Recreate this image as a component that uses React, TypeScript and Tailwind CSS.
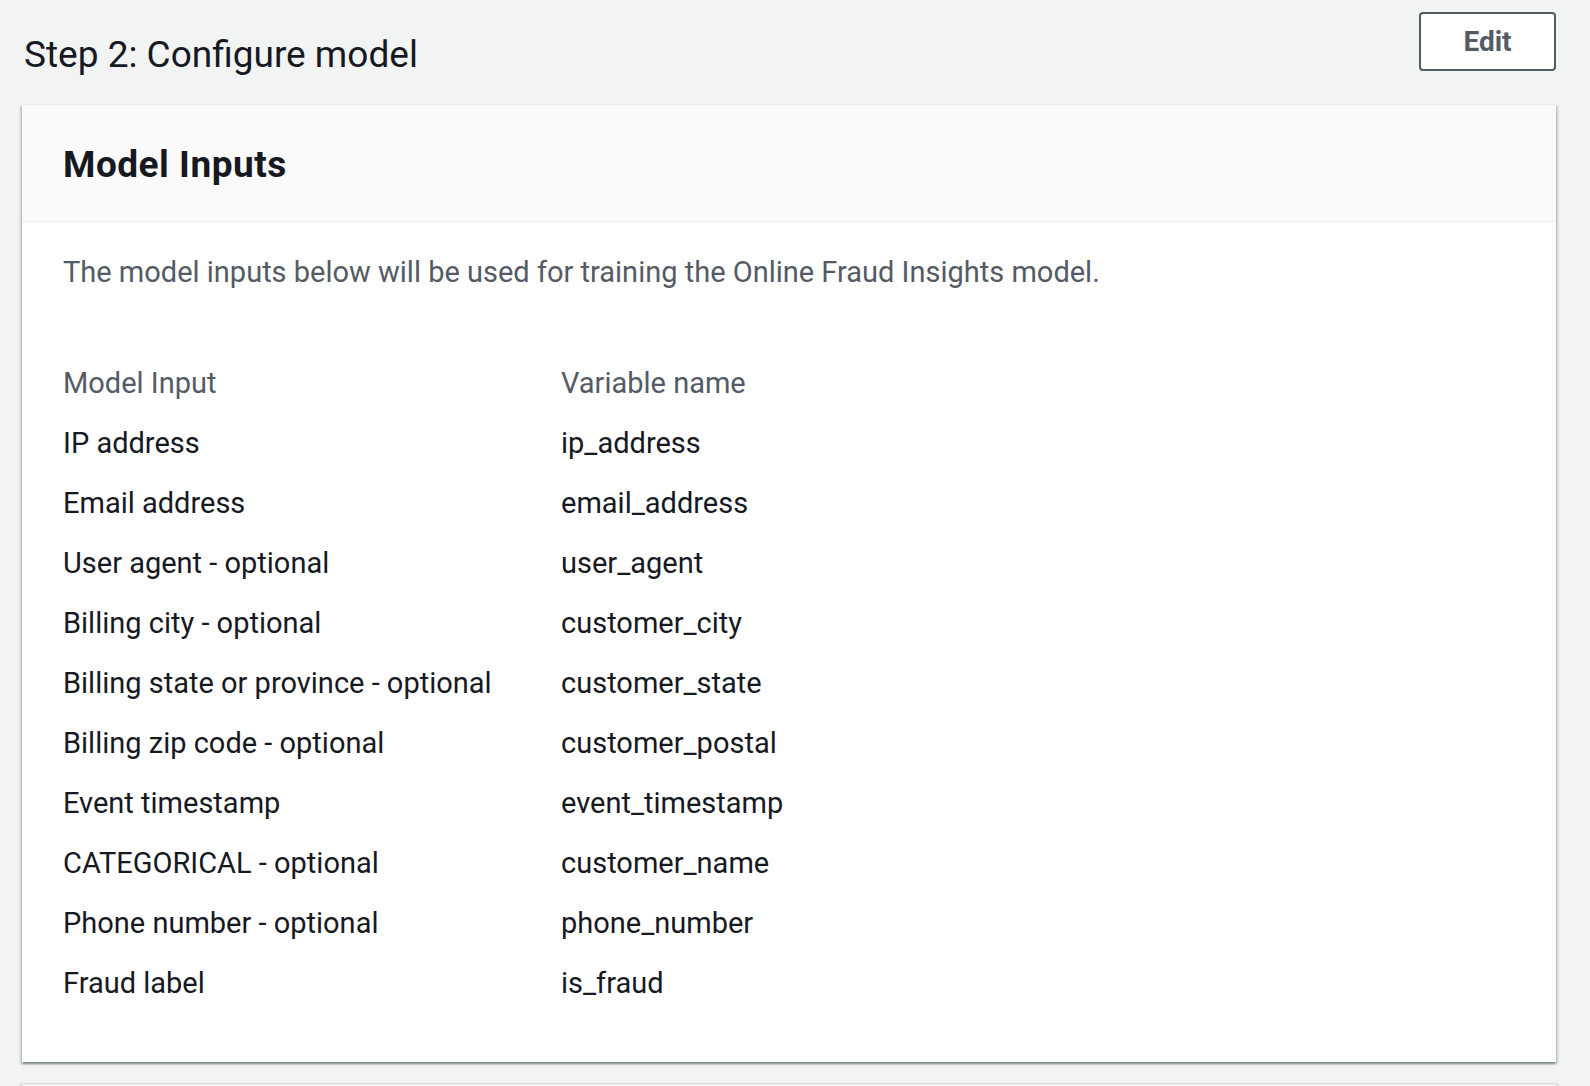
const rows: [string, string][] = [
  ['IP address', 'ip_address'],
  ['Email address', 'email_address'],
  ['User agent - optional', 'user_agent'],
  ['Billing city - optional', 'customer_city'],
  ['Billing state or province - optional', 'customer_state'],
  ['Billing zip code - optional', 'customer_postal'],
  ['Event timestamp', 'event_timestamp'],
  ['CATEGORICAL - optional', 'customer_name'],
  ['Phone number - optional', 'phone_number'],
  ['Fraud label', 'is_fraud'],
];

export default function App() {
  return (
    <div
      className="min-h-[1086px] bg-[#f2f3f3] pl-[22px] pr-[34px] text-[#16191f]"
      style={{ fontFamily: 'Roboto, "Open Sans", sans-serif' }}
    >
      {/* Step header */}
      <div className="flex h-[104px] items-start justify-between">
        <h2 className="mt-[32px] pl-[2px] text-[37px] leading-[46px] font-normal">Step 2: Configure model</h2>
        <button className="mt-[12px] h-[59px] w-[137px] rounded-[4px] border-2 border-[#545b64] bg-white text-[28px] font-bold text-[#545b64]">
          Edit
        </button>
      </div>

      {/* Model inputs card */}
      <div className="bg-white shadow-[0_2px_2px_0_rgba(0,28,36,0.3),2px_2px_2px_0_rgba(0,28,36,0.15),-2px_2px_2px_0_rgba(0,28,36,0.15)]">
        <div className="flex h-[118px] items-center border-t border-b border-[#eaeded] bg-[#fafafa] px-[41px] pt-[3px]">
          <h3 className="text-[37px] font-bold tracking-[0.5px]">Model Inputs</h3>
        </div>
        <div className="px-[41px] pt-[30px] pb-[48px]">
          <p className="text-[29px] leading-[40px] text-[#545b64]">
            The model inputs below will be used for training the Online Fraud Insights model.
          </p>
          <div className="mt-[62px] text-[29px]">
            <div className="flex h-[60px] items-center text-[#545b64]">
              <div className="w-[498px]">Model Input</div>
              <div>Variable name</div>
            </div>
            {rows.map(([label, name]) => (
              <div key={name} className="flex h-[60px] items-center">
                <div className="w-[498px]">{label}</div>
                <div>{name}</div>
              </div>
            ))}
          </div>
        </div>
      </div>

      {/* Next card peeking in */}
      <div className="mt-[22px] h-[40px] border-t border-[#eaeded] bg-[#fafafa] shadow-[2px_0_2px_0_rgba(0,28,36,0.15),-2px_0_2px_0_rgba(0,28,36,0.15)]" />
    </div>
  );
}
